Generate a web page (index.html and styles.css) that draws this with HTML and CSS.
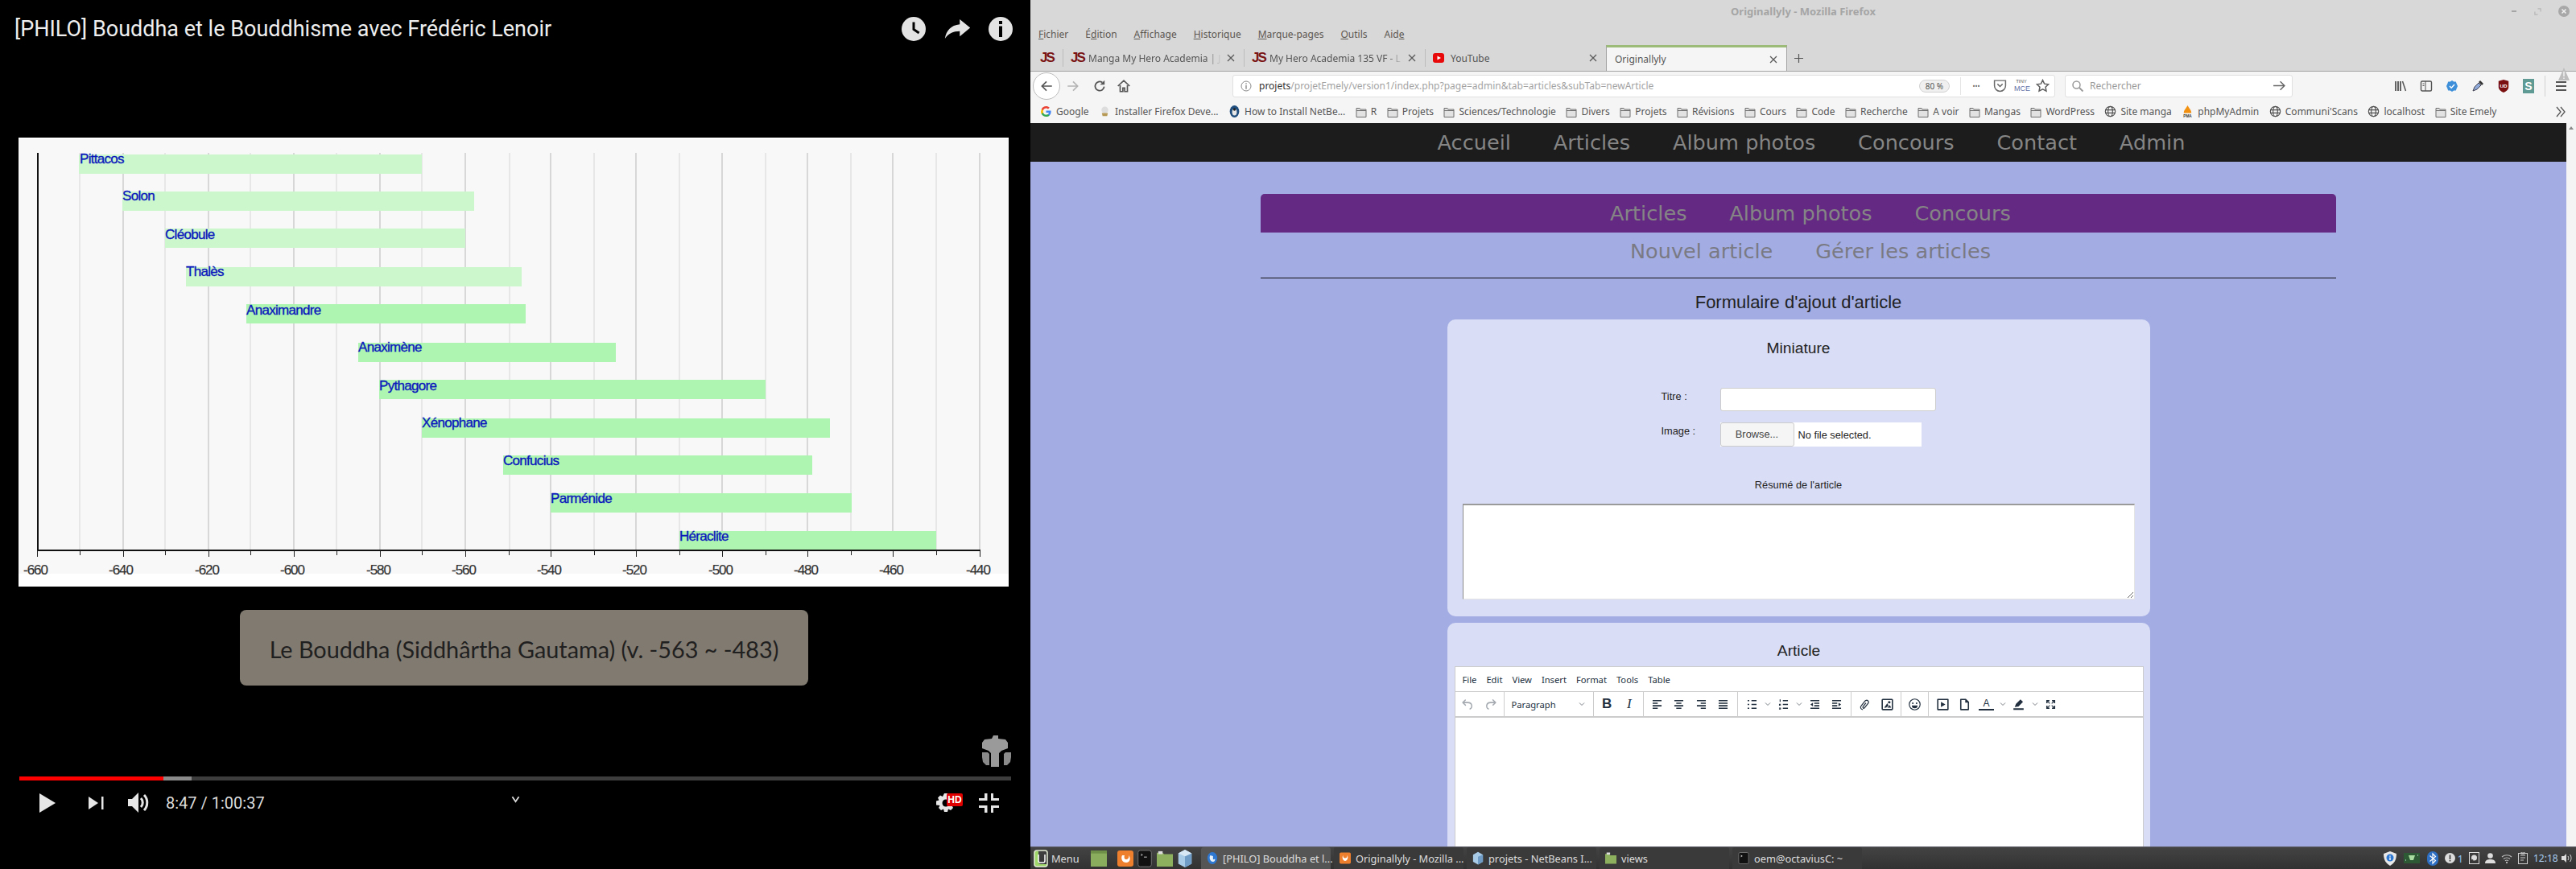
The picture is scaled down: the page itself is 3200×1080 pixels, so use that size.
FILE: index.html
```html
<!doctype html>
<html>
<head>
<meta charset="utf-8">
<title>Originallyly</title>
<link rel="stylesheet" href="styles.css">
</head>
<body>

<svg class="defs" width="0" height="0">
	<symbol id="folder" viewBox="0 0 14 16"><path d="M1 3.500h4l1 1.500h7v9.500H1z" fill="#e2e2e2" stroke="#6e6e6e"/><path d="M1 6.500h12" stroke="#6e6e6e"/></symbol>
	<symbol id="globe" viewBox="0 0 16 16"><g fill="none" stroke="#4f4f4f" stroke-width="1.2"><circle cx="8" cy="8" r="6.6"/><ellipse cx="8" cy="8" rx="3" ry="6.6"/><path d="M1.600 6h12.800M1.600 10h12.800"/></g></symbol>
	<symbol id="close" viewBox="0 0 10 10"><path d="M1 1l8 8M9 1l-8 8" stroke="#5a5a5a" stroke-width="1.3" fill="none"/></symbol>
	<symbol id="chev" viewBox="0 0 10 10"><path d="M2 3.500l3 3 3-3" stroke="#7b8086" stroke-width="1" fill="none"/></symbol>
</svg>

<div class="player">
	<div class="player-top">
		<div class="video-title">[PHILO] Bouddha et le Bouddhisme avec Frédéric Lenoir</div>
		<svg class="top-icon clock" viewBox="0 0 30 30"><circle cx="15" cy="15" r="15" fill="#e3e3e3"/><path d="M13.500 6.500h3v8.300l6 4-1.700 2.400-7.300-5z" fill="#000"/></svg>
		<svg class="top-icon share" viewBox="0 0 34 26"><path d="M20 0l14 11.500L20 23v-7C11 16 5 19 0 26 2 15 8 8 20 6.800z" fill="#e3e3e3"/></svg>
		<svg class="top-icon info" viewBox="0 0 30 30"><circle cx="15" cy="15" r="15" fill="#e3e3e3"/><path d="M13 5h4v4h-4zM13 11.500h4V25h-4z" fill="#000"/></svg>
	</div>

	<svg class="chart" viewBox="23 171 1230 558">
		<rect x="23" y="171" width="1230" height="558" fill="#fff"/>
		<rect x="23" y="173" width="1230" height="540" fill="#f8f8f8"/>
		<path class="grid-minor" d="M99 190V683M205 190V683M311 190V683M418 190V683M524 190V683M633 190V683M738 190V683M844 190V683M951 190V683M1057 190V683M1163 190V683"/>
		<path class="grid-major" d="M153 190V683M259 190V683M365 190V683M472 190V683M578 190V683M684 190V683M790 190V683M897 190V683M1003 190V683M1109 190V683M1217 190V683"/>
		<g class="bars-old">
			<rect x="98" y="192" width="426" height="24"/>
			<rect x="152" y="238" width="437" height="24"/>
			<rect x="205" y="284" width="373" height="24"/>
			<rect x="231" y="332" width="417" height="24"/>
		</g>
		<g class="bars">
			<rect x="306" y="378" width="347" height="24"/>
			<rect x="445" y="426" width="320" height="24"/>
			<rect x="471" y="472" width="480" height="24"/>
			<rect x="524" y="520" width="507" height="24"/>
			<rect x="625" y="566" width="384" height="24"/>
			<rect x="684" y="613" width="374" height="24"/>
			<rect x="844" y="660" width="319" height="23"/>
		</g>
		<g class="names">
			<text x="99" y="203">Pittacos</text>
			<text x="152" y="249">Solon</text>
			<text x="205" y="297">Cléobule</text>
			<text x="231" y="343">Thalès</text>
			<text x="306" y="391">Anaximandre</text>
			<text x="445" y="437">Anaximène</text>
			<text x="471" y="485">Pythagore</text>
			<text x="524" y="531">Xénophane</text>
			<text x="625" y="578">Confucius</text>
			<text x="684" y="625">Parménide</text>
			<text x="844" y="672">Héraclite</text>
		</g>
		<path class="axis" d="M47 190V684H1218"/>
		<path class="ticks" d="M46.500 684V692M99.500 684V690M153.500 684V692M205.500 684V690M259.500 684V692M311.500 684V690M365.500 684V692M418.500 684V690M472.500 684V692M524.500 684V690M578.500 684V692M632.500 684V690M684.500 684V692M738.500 684V690M790.500 684V692M844.500 684V690M897.500 684V692M951.500 684V690M1003.500 684V692M1057.500 684V690M1109.500 684V692M1163.500 684V690M1217.500 684V692"/>
		<g class="years">
			<text x="44" y="714">-660</text>
			<text x="150" y="714">-640</text>
			<text x="257" y="714">-620</text>
			<text x="363" y="714">-600</text>
			<text x="470" y="714">-580</text>
			<text x="576" y="714">-560</text>
			<text x="682" y="714">-540</text>
			<text x="788" y="714">-520</text>
			<text x="895" y="714">-500</text>
			<text x="1001" y="714">-480</text>
			<text x="1107" y="714">-460</text>
			<text x="1215" y="714">-440</text>
		</g>
	</svg>

	<div class="caption">Le Bouddha (Siddhârtha Gautama) (v. -563 ~ -483)</div>

	<svg class="watermark" viewBox="0 0 38 39">
		<path d="M15 0h6v4l9 1 3 4v7l-8 3-3 3v17h-10V22l-3-3-8-3V9l3-4 9-1z" fill="#9a9a9a"/>
		<path d="M1 21h7l2 2v14H6l-4-4-1-6zM37 21h-7l-2 2v14h4l4-4 1-6z" fill="#8a8a8a"/>
	</svg>

	<div class="progress"><div class="played"></div><div class="loaded"></div></div>

	<div class="controls">
		<svg class="ctl-play" viewBox="0 0 20 24"><path d="M0 0l20 12L0 24z" fill="#e6e6e6"/></svg>
		<svg class="ctl-next" viewBox="0 0 19 16"><path d="M0 0l12 8-12 8z" fill="#e6e6e6"/><path d="M16 0h2.500v16H16z" fill="#e6e6e6"/></svg>
		<svg class="ctl-vol" viewBox="0 0 27 25"><path d="M0 8h5l8-8v25l-8-8H0z" fill="#e6e6e6"/><path d="M16 7c3 3 3 8 0 11M20 3c5 5 5 14 0 19" fill="none" stroke="#e6e6e6" stroke-width="3"/></svg>
		<div class="time">8:47 / 1:00:37</div>
		<svg class="ctl-chev" viewBox="0 0 12 10"><path d="M1.500 1.500L6 8l4.500-6.500" fill="none" stroke="#ddd" stroke-width="2"/></svg>
		<div class="settings">
			<svg viewBox="0 0 24 24"><path d="M10 0h4l1 3.500 3-1.500 3 3-1.500 3 3.500 1v5l-3.500 1 1.500 3-3 3-3-1.500-1 3.500h-4l-1-3.500-3 1.500-3-3 1.500-3L0 14.500v-5l3.500-1L2 5.500l3-3 3 1.500z" fill="#e6e6e6"/><circle cx="12" cy="12" r="4.500" fill="#000"/></svg>
			<span class="hd">HD</span>
		</div>
		<svg class="ctl-exit" viewBox="0 0 25 24"><path d="M7 0h3.500v9H0V6h7zM15 0h3v6h7v3H15zM0 15h10.500v9H7v-6H0zM15 15h10v3h-7v6h-3z" fill="#e6e6e6"/></svg>
	</div>
</div>

<div class="firefox">
	<div class="titlebar">
		<div></div>
		<div class="win-title">Originallyly - Mozilla Firefox</div>
		<div class="win-btns">
			<span class="win-min"></span>
			<svg class="win-max" viewBox="0 0 10 10"><path d="M1 5v4h4M5 1h4v4" fill="none" stroke="#b5b5b5" stroke-width="1.300"/></svg>
			<svg class="win-close" viewBox="0 0 14 14"><circle cx="7" cy="7" r="7" fill="#a8a8a8"/><path d="M4.500 4.500l5 5M9.500 4.500l-5 5" stroke="#f2f2f2" stroke-width="1.500"/></svg>
		</div>
	</div>

	<div class="menubar">
		<span><u>F</u>ichier</span><span>É<u>d</u>ition</span><span><u>A</u>ffichage</span><span><u>H</u>istorique</span><span><u>M</u>arque-pages</span><span><u>O</u>utils</span><span>Aid<u>e</u></span>
	</div>

	<div class="tabs">
		<div class="tab pinned"><span class="fav-js">JS</span></div>
		<div class="tab"><span class="fav-js">JS</span><span class="tab-name fade">Manga My Hero Academia | J</span><svg class="tab-x"><use href="#close"/></svg></div>
		<div class="tab"><span class="fav-js">JS</span><span class="tab-name fade">My Hero Academia 135 VF - L</span><svg class="tab-x"><use href="#close"/></svg></div>
		<div class="tab"><svg class="fav-yt" viewBox="0 0 14 14"><rect x="0" y="1" width="14" height="12" rx="3" fill="#e8090b"/><path d="M5.500 4.500v5L10 7z" fill="#fff"/></svg><span class="tab-name">YouTube</span><svg class="tab-x"><use href="#close"/></svg></div>
		<div class="tab active"><span class="tab-name">Originallyly</span><svg class="tab-x"><use href="#close"/></svg></div>
		<svg class="tab-new" viewBox="0 0 12 12"><path d="M6 0v12M0 6h12" stroke="#555" stroke-width="1.300"/></svg>
	</div>

	<div class="navbar">
		<div class="back"><svg viewBox="0 0 16 16"><path d="M14 8H3M8 3L3 8l5 5" fill="none" stroke="#555" stroke-width="1.500"/></svg></div>
		<svg class="nav-ico forward" viewBox="0 0 16 16"><path d="M2 8h11M8 3l5 5-5 5" fill="none" stroke="#b4b4b4" stroke-width="1.500"/></svg>
		<svg class="nav-ico reload" viewBox="0 0 16 16"><path d="M13 8.500A5 5 0 1 1 11 4" fill="none" stroke="#555" stroke-width="1.600"/><path d="M13.500 1.500v5h-5z" fill="#555"/></svg>
		<svg class="nav-ico home" viewBox="0 0 16 16"><path d="M1.500 8L8 2l6.500 6M4 7v7h3v-4h2v4h3V7" fill="none" stroke="#555" stroke-width="1.500"/></svg>
		<div class="urlbar">
			<svg class="url-info" viewBox="0 0 14 14"><circle cx="7" cy="7" r="6" fill="none" stroke="#8a8a8a"/><path d="M6.300 3.300h1.400v1.400H6.300zM6.300 6h1.400v4.700H6.300z" fill="#8a8a8a"/></svg>
			<div class="url-text"><span class="url-host">projets</span>/projetEmely/version1/index.php?page=admin&amp;tab=articles&amp;subTab=newArticle</div>
			<div class="url-zoom">80 %</div>
			<div class="url-sep"></div>
			<div class="url-more">•••</div>
			<svg class="url-pocket" viewBox="0 0 16 16"><path d="M1.500 2h13v6a6.500 6.500 0 0 1-13 0z" fill="none" stroke="#6a6a6a" stroke-width="1.400"/><path d="M5 6l3 3 3-3" fill="none" stroke="#6a6a6a" stroke-width="1.400"/></svg>
			<div class="url-tiny"><span>TINY</span><span class="mce">MCE</span></div>
			<svg class="url-star" viewBox="0 0 16 16"><path d="M8 1.500l2 4.300 4.700.6-3.400 3.200.9 4.700L8 12l-4.200 2.300.9-4.700L1.300 6.400 6 5.800z" fill="none" stroke="#5f5f5f" stroke-width="1.400"/></svg>
		</div>
		<div class="searchbar">
			<svg class="search-ico" viewBox="0 0 16 16"><circle cx="6.500" cy="6.500" r="4.500" fill="none" stroke="#999" stroke-width="1.500"/><path d="M10 10l4.500 4.500" stroke="#999" stroke-width="1.800"/></svg>
			<div class="search-text">Rechercher</div>
			<svg class="search-go" viewBox="0 0 16 16"><path d="M1 8h13M9 3l5 5-5 5" fill="none" stroke="#666" stroke-width="1.400"/></svg>
		</div>
		<div class="ext-icons">
			<svg viewBox="0 0 16 16"><path d="M2 2v12M5 2v12M8 2v12" stroke="#555" stroke-width="1.800"/><path d="M10.500 2l4 12" stroke="#555" stroke-width="1.500"/></svg>
			<svg viewBox="0 0 16 16"><rect x="1.500" y="2" width="13" height="12" rx="1.500" fill="none" stroke="#555" stroke-width="1.400"/><path d="M7 2v12" stroke="#555"/><path d="M3.500 5h2M3.500 7.500h2" stroke="#555"/></svg>
			<svg viewBox="0 0 16 16"><path d="M8 1l2.200 1.400 2.600.2.900 2.400L15 8l-1.300 3-.9 2.400-2.600.2L8 15l-2.200-1.400-2.600-.2-.9-2.400L1 8l1.300-3 .9-2.400 2.600-.2z" fill="#3d8fd9"/><path d="M5 8l2.200 2.200L11 6" fill="none" stroke="#fff" stroke-width="1.400"/></svg>
			<svg viewBox="0 0 16 16"><path d="M2 14l2-5 5-5 3 3-5 5z" fill="#8faad8" stroke="#445"/><path d="M9 3l2-2 4 4-2 2z" fill="#333"/></svg>
			<svg viewBox="0 0 16 18"><path d="M8 0l7 2v8c0 4-4 6.500-7 8-3-1.500-7-4-7-8V2z" fill="#7a1010"/><text x="8" y="11" class="ublock">UD</text></svg>
			<span class="ext-s">S</span>
			<div class="ext-sep"></div>
			<div class="hamburger"><span></span><span></span><span></span><svg class="warn" viewBox="0 0 14 16"><path d="M7 0l7 16H0z" fill="#bdbdbd"/><path d="M6.300 5h1.400v6H6.300zM6.300 12.500h1.400V14H6.300z" fill="#f5f5f5"/></svg></div>
		</div>
	</div>

	<div class="bookmarks">
		<div class="bm"><svg class="bm-ico" viewBox="0 0 16 16"><path d="M14.500 8.200c0-.5 0-1-.1-1.400H8v2.700h3.700c-.2.900-.7 1.600-1.400 2.100v1.700h2.200c1.300-1.200 2-3 2-5.100z" fill="#4285f4"/><path d="M8 15c1.900 0 3.400-.6 4.500-1.700l-2.200-1.700c-.6.400-1.400.7-2.300.7-1.800 0-3.300-1.200-3.800-2.800H1.900v1.800C3 13.500 5.300 15 8 15z" fill="#34a853"/><path d="M4.200 9.500c-.3-.9-.3-1.800 0-2.700V5H1.900a7 7 0 0 0 0 6.300z" fill="#fbbc05"/><path d="M8 3.800c1 0 1.900.4 2.600 1l2-2C11.400 1.700 9.800 1 8 1 5.300 1 3 2.500 1.900 4.800l2.300 1.800C4.700 5 6.200 3.800 8 3.800z" fill="#ea4335"/></svg><span>Google</span></div>
		<div class="bm"><svg class="bm-ico" viewBox="0 0 16 16"><circle cx="8" cy="6" r="4.500" fill="#ddd"/><path d="M4 10h8l-1 4H5z" fill="#b79a55"/></svg><span>Installer Firefox Deve...</span></div>
		<div class="bm"><svg class="bm-ico" viewBox="0 0 16 18"><ellipse cx="8" cy="9" rx="7" ry="9" fill="#1f4d7d"/><ellipse cx="8" cy="10" rx="3.500" ry="5" fill="#e8e8e8"/><circle cx="8" cy="6" r="2" fill="#222"/></svg><span>How to Install NetBe...</span></div>
		<div class="bm"><svg class="bm-fold"><use href="#folder"/></svg><span>R</span></div>
		<div class="bm"><svg class="bm-fold"><use href="#folder"/></svg><span>Projets</span></div>
		<div class="bm"><svg class="bm-fold"><use href="#folder"/></svg><span>Sciences/Technologie</span></div>
		<div class="bm"><svg class="bm-fold"><use href="#folder"/></svg><span>Divers</span></div>
		<div class="bm"><svg class="bm-fold"><use href="#folder"/></svg><span>Projets</span></div>
		<div class="bm"><svg class="bm-fold"><use href="#folder"/></svg><span>Révisions</span></div>
		<div class="bm"><svg class="bm-fold"><use href="#folder"/></svg><span>Cours</span></div>
		<div class="bm"><svg class="bm-fold"><use href="#folder"/></svg><span>Code</span></div>
		<div class="bm"><svg class="bm-fold"><use href="#folder"/></svg><span>Recherche</span></div>
		<div class="bm"><svg class="bm-fold"><use href="#folder"/></svg><span>A voir</span></div>
		<div class="bm"><svg class="bm-fold"><use href="#folder"/></svg><span>Mangas</span></div>
		<div class="bm"><svg class="bm-fold"><use href="#folder"/></svg><span>WordPress</span></div>
		<div class="bm"><svg class="bm-ico"><use href="#globe"/></svg><span>Site manga</span></div>
		<div class="bm"><svg class="bm-ico" viewBox="0 0 16 16"><path d="M3 10C3 6 6 4 8 0c2 4 5 6 5 10z" fill="#f29111"/><text x="8" y="15.500" class="pma">PMA</text></svg><span>phpMyAdmin</span></div>
		<div class="bm"><svg class="bm-ico"><use href="#globe"/></svg><span>Communi'Scans</span></div>
		<div class="bm"><svg class="bm-ico"><use href="#globe"/></svg><span>localhost</span></div>
		<div class="bm"><svg class="bm-fold"><use href="#folder"/></svg><span>Site Emely</span></div>
		<svg class="bm-more" viewBox="0 0 14 14"><path d="M2 1l5 6-5 6M7 1l5 6-5 6" fill="none" stroke="#555" stroke-width="1.300"/></svg>
	</div>

	<div class="viewport">
		<div class="page">
			<div class="site-nav">
				<a>Accueil</a><a>Articles</a><a>Album photos</a><a>Concours</a><a>Contact</a><a>Admin</a>
			</div>
			<div class="admin">
				<div class="admin-nav"><a>Articles</a><a>Album photos</a><a>Concours</a></div>
				<div class="sub-nav"><a>Nouvel article</a><a>Gérer les articles</a></div>
				<div class="rule"></div>
				<div class="form-title">Formulaire d'ajout d'article</div>

				<div class="card">
					<div class="card-title">Miniature</div>
					<div class="row first">
						<label>Titre :</label>
						<div class="text-input"></div>
					</div>
					<div class="row">
						<label>Image :</label>
						<div class="file-input"><span class="browse">Browse...</span><span class="nofile">No file selected.</span></div>
					</div>
					<div class="resume-label">Résumé de l'article</div>
					<textarea class="resume"></textarea>
				</div>

				<div class="card editor-card">
					<div class="card-title">Article</div>
					<div class="editor">
						<div class="ed-menu"><span>File</span><span>Edit</span><span>View</span><span>Insert</span><span>Format</span><span>Tools</span><span>Table</span></div>
						<div class="ed-tools">
							<div class="ed-group g-history">
								<svg class="ed-ico off" viewBox="0 0 24 24"><path d="M6.400 8H12c3.700 0 6.200 2 6.800 5.100.6 2.700-.4 5.600-2.900 6.700a1 1 0 1 1-.8-1.800c1.600-.7 2.300-2.700 1.900-4.500-.5-2.200-2.300-3.500-5-3.500H6.400l2.300 2.300a1 1 0 1 1-1.400 1.400l-4-4a1 1 0 0 1 0-1.400l4-4a1 1 0 0 1 1.400 1.400z"/></svg>
								<svg class="ed-ico off" viewBox="0 0 24 24"><path d="M17.600 10H12c-2.800 0-4.400 1.400-4.900 3.500-.4 2 .3 3.900 1.900 4.500a1 1 0 1 1-.8 1.800c-2.500-1-3.500-4-2.900-6.700C5.800 10 8.300 8 12 8h5.600l-2.300-2.300a1 1 0 1 1 1.400-1.400l4 4a1 1 0 0 1 0 1.400l-4 4a1 1 0 0 1-1.400-1.400z"/></svg>
							</div>
							<div class="ed-group para"><span>Paragraph</span><svg class="ed-chev"><use href="#chev"/></svg></div>
							<div class="ed-group g-style">
								<b class="ed-b">B</b><i class="ed-i">I</i>
							</div>
							<div class="ed-group g-align">
								<svg class="ed-ico" viewBox="0 0 24 24"><path d="M5 5h14v2H5zM5 9h8v2H5zM5 13h14v2H5zM5 17h8v2H5z"/></svg>
								<svg class="ed-ico" viewBox="0 0 24 24"><path d="M5 5h14v2H5zM8 9h8v2H8zM5 13h14v2H5zM8 17h8v2H8z"/></svg>
								<svg class="ed-ico" viewBox="0 0 24 24"><path d="M5 5h14v2H5zM11 9h8v2h-8zM5 13h14v2H5zM11 17h8v2h-8z"/></svg>
								<svg class="ed-ico" viewBox="0 0 24 24"><path d="M5 5h14v2H5zM5 9h14v2H5zM5 13h14v2H5zM5 17h14v2H5z"/></svg>
							</div>
							<div class="ed-group g-lists">
								<svg class="ed-ico" viewBox="0 0 24 24"><path d="M11 5h8v2h-8zM11 11h8v2h-8zM11 17h8v2h-8zM5 5h2.500v2H5zM5 11h2.500v2H5zM5 17h2.500v2H5z"/></svg>
								<svg class="ed-chev"><use href="#chev"/></svg>
								<svg class="ed-ico" viewBox="0 0 24 24"><path d="M11 5h8v2h-8zM11 11h8v2h-8zM11 17h8v2h-8zM6 4h1.500v4H6zM5 11h3v1l-2 1h2v1H5zM5 17h3v3H5v-1h2v-.500H5z"/></svg>
								<svg class="ed-chev"><use href="#chev"/></svg>
								<svg class="ed-ico" viewBox="0 0 24 24"><path d="M5 5h14v2H5zM11 9h8v2h-8zM11 13h8v2h-8zM5 17h14v2H5zM9 9v6l-4-3z"/></svg>
								<svg class="ed-ico spaced" viewBox="0 0 24 24"><path d="M5 5h14v2H5zM5 9h8v2H5zM5 13h8v2H5zM5 17h14v2H5zM15 9v6l4-3z"/></svg>
							</div>
							<div class="ed-group g-insert">
								<svg class="ed-ico" viewBox="0 0 24 24"><path d="M9 20a3.500 3.500 0 0 1-2.500-6l6-7.500a3 3 0 0 1 4.700 3.800l-5.500 7a1.500 1.500 0 0 1-2.400-1.900l4.500-5.700" fill="none" stroke="#222f3e" stroke-width="1.600"/></svg>
								<svg class="ed-ico" viewBox="0 0 24 24"><path d="M5 3h14a2 2 0 0 1 2 2v14a2 2 0 0 1-2 2H5a2 2 0 0 1-2-2V5a2 2 0 0 1 2-2zm0 2v14h14V5z"/><circle cx="15" cy="8.500" r="2"/><path d="M7 17l5-7 2 4-4 3z"/><path d="M12 17l4-4 2 4z"/></svg>
							</div>
							<div class="ed-group g-emoji">
								<svg class="ed-ico" viewBox="0 0 24 24"><circle cx="12" cy="12" r="8.500" fill="none" stroke="#222f3e" stroke-width="1.500"/><circle cx="9" cy="10" r="1.300"/><circle cx="15" cy="10" r="1.300"/><path d="M7.500 13.500h9a4.500 4.500 0 0 1-9 0z"/></svg>
							</div>
							<div class="ed-group g-last">
								<svg class="ed-ico" viewBox="0 0 24 24"><path d="M4 3h16a1 1 0 0 1 1 1v16a1 1 0 0 1-1 1H4a1 1 0 0 1-1-1V4a1 1 0 0 1 1-1zm1 2v14h14V5z"/><path d="M9 8l7 4-7 4z"/></svg>
								<svg class="ed-ico spaced" viewBox="0 0 24 24"><path d="M6 3h8l5 5v12a1 1 0 0 1-1 1H6a1 1 0 0 1-1-1V4a1 1 0 0 1 1-1zm1 2v14h10V9h-4V5z"/></svg>
								<span class="ed-a spaced">A</span>
								<svg class="ed-chev"><use href="#chev"/></svg>
								<svg class="ed-ico" viewBox="0 0 24 24"><path d="M4 18h16v2.500H4zM6 16l2-5 7-7 4 4-7 7z"/></svg>
								<svg class="ed-chev"><use href="#chev"/></svg>
								<svg class="ed-ico" viewBox="0 0 24 24"><path d="M5 5h5v2H8l3 3-1 1-3-3v2H5zM19 5v5h-2V8l-3 3-1-1 3-3h-2V5zM5 19v-5h2v2l3-3 1 1-3 3h2v2zM19 19h-5v-2h2l-3-3 1-1 3 3v-2h2z"/></svg>
							</div>
						</div>
						<div class="ed-body"></div>
					</div>
				</div>
			</div>
		</div>
		<div class="scrollbar"><svg viewBox="0 0 8 6"><path d="M4 1l3 4H1z" fill="#888"/></svg></div>
	</div>

	<div class="taskbar">
		<div class="start">
			<svg class="mint" viewBox="0 0 18 22"><path d="M1 2h5v13c0 2 1 3 3 3h7v-2 3a2 2 0 0 1-2 2H5c-3 0-4-2-4-4z" fill="#9fd66a"/><rect x="1" y="1" width="16" height="20" rx="3" fill="none" stroke="#e6f0d8" stroke-width="1.500"/><path d="M6 6v8c0 1 1 2 2 2h4c1 0 2-1 2-2V6" fill="none" stroke="#fff" stroke-width="1.500"/></svg>
			<span>Menu</span>
		</div>
		<svg class="launch desk" viewBox="0 0 22 22"><rect width="22" height="22" fill="#89ad5c"/><rect width="22" height="4" fill="#6d8f47"/></svg>
		<svg class="launch ffx" viewBox="0 0 20 22"><rect y="1" width="20" height="20" rx="3" fill="#ee7f2d"/><path d="M6 7c-2 4 0 9 5 9s6-6 3-9c1 3-1 5-3 5S8 10 9 7z" fill="#fff"/></svg>
		<svg class="launch term" viewBox="0 0 20 24"><rect x="1" y="1" width="18" height="22" rx="3" fill="#111" stroke="#777"/><path d="M5 6l2 1-2 1M9 10h4" stroke="#ddd" fill="none"/></svg>
		<svg class="launch fold" viewBox="0 0 22 22"><path d="M0 3h8l2 2h12v17H0z" fill="#8cb05e"/><path d="M2 1h6v4H2z" fill="#ddd"/></svg>
		<svg class="launch box" viewBox="0 0 20 24"><path d="M10 0l9 5v14l-9 5-9-5V5z" fill="#a8cbe8"/><path d="M10 9v15l9-5V5z" fill="#6e9cc6"/><path d="M1 5l9 4 9-4-9-5z" fill="#d8e8f5"/></svg>
		<div class="task current"><svg viewBox="0 0 16 18"><ellipse cx="8" cy="9" rx="7" ry="8.500" fill="#2e78d2"/><path d="M5 5c-2 4 0 9 4 9 2 0 3-2 3-4l-3 1 0-5z" fill="#e6f0fa"/></svg><span>[PHILO] Bouddha et l...</span></div>
		<div class="task"><svg viewBox="0 0 16 18"><rect y="1" width="16" height="16" rx="2" fill="#ee7f2d"/><path d="M5 5c-2 3 0 8 3 8s5-5 3-8c0 3-1 4-3 4S5 8 5 5z" fill="#fff"/></svg><span>Originallyly - Mozilla ...</span></div>
		<div class="task"><svg viewBox="0 0 16 18"><path d="M8 0l7 4v10l-7 4-7-4V4z" fill="#a8cbe8"/><path d="M8 7v11l7-4V4z" fill="#6e9cc6"/></svg><span>projets - NetBeans I...</span></div>
		<div class="task"><svg viewBox="0 0 16 18"><path d="M0 3h6l1 2h9v12H0z" fill="#8cb05e"/><path d="M2 1h5v3H2z" fill="#ddd"/></svg><span>views</span></div>
		<div class="task"><svg viewBox="0 0 16 18"><rect x="1" y="1" width="14" height="16" rx="2" fill="#111" stroke="#777"/><path d="M4 5l2 1-2 1" stroke="#ddd" fill="none"/></svg><span>oem@octaviusC: ~</span></div>
		<div class="tray">
			<svg class="shield" viewBox="0 0 16 18"><path d="M8 0l8 3c0 8-3 12-8 15C3 15 0 11 0 3z" fill="#e8e8e8"/><circle cx="8" cy="8" r="4.500" fill="#2e78d2"/><path d="M7.300 5.500h1.400v1.300H7.300zM7.300 7.500h1.400v3.500H7.300z" fill="#fff"/></svg>
			<svg class="chip" viewBox="0 0 20 13"><rect width="20" height="13" fill="#2d5a35"/><path d="M6 3h8l-2 6H8z" fill="#a8dca0"/><path d="M2 9h1M17 3h1" stroke="#dfe"/></svg>
			<svg class="blue" viewBox="0 0 14 18"><rect width="14" height="18" rx="7" fill="#2e6fc4"/><path d="M3.500 5.500l7 6L7 15V3l3.500 3.500-7 6" fill="none" stroke="#fff" stroke-width="1.200"/></svg>
			<svg class="warn-c" viewBox="0 0 13 13"><circle cx="6.500" cy="6.500" r="6.500" fill="#ddd"/><path d="M5.700 2.500h1.600v5.500H5.700zM5.700 9h1.600v1.600H5.700z" fill="#333"/></svg>
			<span class="tray-num">1</span>
			<svg class="disk" viewBox="0 0 13 15"><rect x=".5" y=".5" width="12" height="14" fill="none" stroke="#ddd"/><circle cx="6.500" cy="7" r="3.500" fill="#ddd"/><path d="M3 12l2-3" stroke="#333"/></svg>
			<svg class="user" viewBox="0 0 13 13"><circle cx="6.500" cy="3.500" r="3.300" fill="#ddd"/><path d="M0 13c0-4 3-5 6.500-5S13 9 13 13z" fill="#ddd"/></svg>
			<svg class="wifi" viewBox="0 0 14 12"><path d="M1 4c3-3 9-3 12 0M3 6.500c2-2 6-2 8 0M5 8.800c1-1 3-1 4 0" fill="none" stroke="#bbb" stroke-width="1.200"/><circle cx="7" cy="11" r="1" fill="#ddd"/></svg>
			<svg class="clip" viewBox="0 0 12 15"><rect x=".5" y="1.500" width="11" height="13" fill="none" stroke="#ccc"/><path d="M3 4h6M3 7h6M3 10h4M4 0h4v2H4z" stroke="#ccc" fill="none"/></svg>
			<span class="clock-txt">12:18</span>
			<svg class="spk" viewBox="0 0 14 13"><path d="M0 4h3l3-3v11L3 9H0z" fill="#ddd"/><path d="M8 4c1 1.500 1 3.500 0 5M10.500 2c2 2.500 2 6.500 0 9" stroke="#ddd" fill="none"/></svg>
		</div>
	</div>
</div>

</body>
</html>
```

FILE: styles.css
```css
html,body{
	margin:0;
	padding:0;
}
body{
	width:3200px;
	height:1080px;
	overflow:hidden;
	display:flex;
	background:#000;
	font-family:"Noto Sans",sans-serif;
}
.defs{
	position:absolute;
}
svg{
	display:block;
	flex:none;
}

/* video player */
.player{
	width:1280px;
	height:1080px;
	background:#000;
	flex:none;
}
.player-top{
	display:flex;
	align-items:center;
	height:30px;
	padding:21px 0 0 18px;
}
.video-title{
	width:1102px;
	font:27px/30px Roboto,sans-serif;
	color:#eee;
	white-space:nowrap;
}
.top-icon{
	width:30px;
	height:30px;
}
.share{
	width:33px;
	height:24px;
	margin-left:23px;
}
.info{
	margin-left:22px;
}
.chart{
	width:1230px;
	height:558px;
	margin:120px 0 0 23px;
}
.grid-minor{
	stroke:#dcdcdc;
	stroke-width:1.2;
	fill:none;
}
.grid-major{
	stroke:#cacaca;
	stroke-width:1.4;
	fill:none;
}
.bars-old rect{
	fill:#ccf7cc;
}
.bars rect{
	fill:#aef5b2;
}
.names text{
	font:17px "Liberation Sans",sans-serif;
	letter-spacing:-.7px;
	fill:#0a18bc;
	stroke:#0a18bc;
	stroke-width:.35;
}
.axis{
	stroke:#111;
	stroke-width:2;
	fill:none;
}
.ticks{
	stroke:#222;
	stroke-width:1;
	fill:none;
}
.years text{
	font:17px "Liberation Sans",sans-serif;
	letter-spacing:-1px;
	fill:#333;
	stroke:#333;
	stroke-width:.2;
	text-anchor:middle;
}
.caption{
	width:706px;
	height:94px;
	margin:29px 0 0 298px;
	background:#807a70;
	border-radius:8px;
	font:28.8px/98px Lato,sans-serif;
	color:#202020;
	text-align:center;
	white-space:nowrap;
}
.watermark{
	width:38px;
	height:39px;
	margin:62px 0 0 1219px;
}
.progress{
	display:flex;
	width:1232px;
	height:5px;
	margin:12px 0 0 24px;
	background:#3d3d3d;
}
.played{
	width:179px;
	background:#f00;
}
.loaded{
	width:35px;
	background:#8a8a8a;
}
.controls{
	display:flex;
	align-items:center;
	height:25px;
	margin-top:15px;
	padding-left:49px;
}
.ctl-play{
	width:20px;
	height:24px;
}
.ctl-next{
	width:19px;
	height:16px;
	margin-left:41px;
}
.ctl-vol{
	width:27px;
	height:25px;
	margin-left:30px;
}
.time{
	width:125px;
	margin-left:20px;
	font:20px Roboto,sans-serif;
	color:#ddd;
	white-space:nowrap;
}
.ctl-chev{
	width:11px;
	height:9px;
	margin:-8px 0 0 303.500px;
}
.settings{
	position:relative;
	width:24px;
	height:24px;
	margin-left:517.500px;
}
.hd{
	position:absolute;
	left:13px;
	top:0;
	width:20px;
	height:16px;
	border-radius:2px;
	background:#e10000;
	color:#fff;
	font:bold 12px/16px "Liberation Sans",sans-serif;
	text-align:center;
}
.ctl-exit{
	width:25px;
	height:24px;
	margin-left:29px;
}

/* firefox window */
.firefox{
	width:1920px;
	height:1080px;
	display:flex;
	flex-direction:column;
	background:#d8d8d8;
	color:#555;
	font-size:12px;
	overflow:hidden;
}
.titlebar{
	display:grid;
	grid-template-columns:1fr auto 1fr;
	align-items:center;
	height:28px;
	flex:none;
}
.win-title{
	font-weight:bold;
	font-size:13px;
	color:#a5a5a5;
}
.win-btns{
	display:flex;
	align-items:center;
	justify-content:flex-end;
	padding-right:8px;
}
.win-min{
	width:6px;
	height:2px;
	background:#a5a5a5;
}
.win-max{
	width:9px;
	height:9px;
	margin-left:22px;
}
.win-close{
	width:14px;
	height:14px;
	margin-left:21px;
}
.menubar{
	display:flex;
	gap:21px;
	align-items:center;
	height:28px;
	padding-left:10px;
	flex:none;
	color:#5c5650;
}
.tabs{
	display:flex;
	height:32px;
	flex:none;
	border-bottom:1px solid #a3a3a3;
}
.tab{
	display:flex;
	align-items:center;
	width:225px;
	padding:0 11px 0 10px;
	box-sizing:border-box;
	position:relative;
}
.tab::before{
	content:"";
	position:absolute;
	left:0;
	top:5px;
	bottom:5px;
	width:1px;
	background:#bcbcbc;
}
.pinned{
	width:40px;
	padding-left:12px;
}
.pinned::before,.active::before{
	display:none;
}
.fav-js{
	width:18px;
	font:bold 17px/20px "Liberation Sans",sans-serif;
	letter-spacing:-2px;
	color:#7a1414;
	flex:none;
}
.fav-yt{
	width:14px;
	height:14px;
	margin:0 8px 0 0;
}
.tab-name{
	flex:1;
	margin-left:4px;
	white-space:nowrap;
}
.fade{
	-webkit-mask-image:linear-gradient(to right,#000 88%,transparent);
}
.tab .fav-yt + .tab-name,.active .tab-name{
	margin-left:0;
}
.tab-x{
	width:10px;
	height:10px;
	margin-left:6px;
}
.active{
	height:32px;
	margin-bottom:-1px;
	background:#f5f5f5;
	border-top:3px solid #9cbb78;
	border-left:1px solid #a3a3a3;
	border-right:1px solid #a3a3a3;
}
.tab-new{
	width:11px;
	height:11px;
	margin:11px 0 0 9px;
}
.navbar{
	display:flex;
	align-items:center;
	height:35px;
	background:#f5f5f5;
	flex:none;
}
.back{
	display:flex;
	align-items:center;
	justify-content:center;
	width:32px;
	height:32px;
	margin-left:3px;
	border:1px solid #bdbdbd;
	border-radius:50%;
	background:#fff;
}
.back svg{
	width:18px;
	height:18px;
}
.nav-ico{
	width:18px;
	height:18px;
}
.forward{
	margin-left:7px;
}
.reload{
	margin-left:15px;
}
.home{
	margin-left:12px;
}
.urlbar{
	display:flex;
	align-items:center;
	width:1022px;
	height:28px;
	margin-left:126px;
	box-sizing:border-box;
	background:#fff;
	border:1px solid #e0e0e0;
	border-radius:3px;
}
.url-info{
	width:14px;
	height:14px;
	margin-left:9px;
}
.url-text{
	width:820px;
	margin-left:9px;
	color:#a3a3a3;
	white-space:nowrap;
}
.url-host{
	color:#333;
}
.url-zoom{
	width:38px;
	height:16px;
	box-sizing:border-box;
	border:1px solid #d2d2d2;
	border-radius:8px;
	background:#f0f0f0;
	font-size:10px;
	line-height:14px;
	text-align:center;
}
.url-sep{
	width:1px;
	height:22px;
	margin-left:13px;
	background:#e4e4e4;
}
.url-more{
	width:20px;
	margin-left:9px;
	font-size:8px;
	color:#666;
	text-align:center;
}
.url-pocket{
	width:17px;
	height:17px;
	margin-left:11px;
}
.url-tiny{
	display:flex;
	flex-direction:column;
	width:18px;
	margin-left:9px;
	font:6px/7px "Liberation Sans",sans-serif;
	color:#555;
	text-align:center;
}
.mce{
	font-size:9px;
	line-height:10px;
	color:#6473a8;
}
.url-star{
	width:17px;
	height:17px;
	margin-left:9px;
}
.searchbar{
	display:flex;
	align-items:center;
	width:283px;
	height:28px;
	margin-left:12px;
	padding:0 7px;
	box-sizing:border-box;
	background:#fff;
	border:1px solid #e0e0e0;
	border-radius:3px;
}
.search-ico{
	width:16px;
	height:16px;
}
.search-text{
	flex:1;
	margin-left:7px;
	color:#9a9a9a;
}
.search-go{
	width:17px;
	height:17px;
}
.ext-icons{
	display:flex;
	align-items:center;
	gap:16px;
	margin-left:126px;
}
.ext-icons > svg{
	width:16px;
	height:16px;
}
.ublock{
	font:bold 7px "Liberation Sans",sans-serif;
	fill:#fff;
	text-anchor:middle;
}
.ext-s{
	width:14px;
	height:18px;
	background:#5f9a94;
	color:#fff;
	font:bold 14px/18px "Liberation Sans",sans-serif;
	text-align:center;
}
.ext-sep{
	width:1px;
	height:26px;
	background:#d2d2d2;
	margin-left:-3px;
}
.hamburger{
	position:relative;
	width:13px;
	margin-left:-3px;
}
.hamburger span{
	display:block;
	height:2px;
	margin:3px 0;
	background:#555;
}
.warn{
	position:absolute;
	left:3px;
	top:-14px;
	width:14px;
	height:16px;
}
.bookmarks{
	display:flex;
	align-items:center;
	gap:12.500px;
	height:29px;
	padding-left:12px;
	background:#f5f5f5;
	flex:none;
}
.bm{
	display:flex;
	align-items:center;
	gap:5px;
	white-space:nowrap;
}
.bm-ico{
	width:15px;
	height:15px;
}
.bm-fold{
	width:14px;
	height:16px;
}
.pma{
	font:bold 5px "Liberation Sans",sans-serif;
	fill:#333;
	text-anchor:middle;
}
.bm-more{
	width:14px;
	height:14px;
	margin-left:auto;
	margin-right:12px;
}

/* page in the browser */
.viewport{
	display:flex;
	flex:1;
	min-height:0;
}
.page{
	flex:1;
	background:#a3ade3;
	overflow:hidden;
}
.scrollbar{
	width:12px;
	background:#f4f4f4;
}
.scrollbar svg{
	width:8px;
	margin:3px auto 0;
}
.site-nav{
	display:flex;
	justify-content:center;
	gap:52.800px;
	height:48px;
	padding-left:32px;
	background:#1c1c1c;
}
.site-nav a,.admin-nav a,.sub-nav a{
	font:25.6px/48px "DejaVu Sans",sans-serif;
	color:#858585;
}
.admin{
	width:1336px;
	margin:40px auto 0;
}
.admin-nav{
	display:flex;
	justify-content:center;
	gap:52.800px;
	height:48px;
	padding-left:30px;
	background:#642a83;
	border-radius:5px 5px 0 0;
}
.sub-nav{
	display:flex;
	justify-content:center;
	gap:52.800px;
	height:46px;
	padding-left:30px;
}
.sub-nav a{
	color:#7a7a84;
	line-height:46px;
}
.rule{
	height:1px;
	margin-top:10px;
	background:#111;
}
.form-title{
	height:30px;
	margin-top:15px;
	font:22px/30px "Liberation Sans",sans-serif;
	color:#222;
	text-align:center;
}
.card{
	width:835px;
	margin:6px auto 0;
	padding:0 19px 21px;
	background:#d9ddf5;
	border-radius:10px;
	color:#222;
	font-family:"Liberation Sans",sans-serif;
}
.card-title{
	height:26px;
	padding-top:23px;
	font-size:19.2px;
	line-height:26px;
	text-align:center;
}
.row{
	display:flex;
	margin:14px 0 0 247px;
	font-size:12.8px;
}
.row.first{
	margin-top:36px;
}
.row label{
	width:73px;
	line-height:19px;
	padding-top:1px;
}
.text-input{
	width:268px;
	height:29px;
	box-sizing:border-box;
	background:#fff;
	border:1px solid #ccc;
	border-radius:3px;
}
.file-input{
	display:flex;
	align-items:center;
	width:250px;
	height:30px;
	background:#fff;
}
.browse{
	width:92px;
	height:30px;
	box-sizing:border-box;
	border:1px solid #ccc;
	border-radius:3px;
	background:#f5f5f5;
	color:#444;
	line-height:28px;
	text-align:center;
}
.nofile{
	margin-left:5px;
}
.resume-label{
	height:20px;
	margin:38px 0 13px;
	font-size:12.8px;
	line-height:20px;
	text-align:center;
}
.resume{
	display:block;
	width:835px;
	height:119px;
	padding:0;
	box-sizing:border-box;
	background:#fff;
	border:1px solid #e4e4e4;
	border-top:2px solid #9a9a9a;
	border-left:1px solid #8a8a8a;
}
.editor-card{
	width:856px;
	height:600px;
	margin-top:8px;
	padding:0 8px 0 9px;
}
.editor-card .card-title{
	padding-top:22px;
}
.editor{
	margin-top:6px;
	background:#fff;
	border:1px solid #ccc;
	font-family:"Noto Sans",sans-serif;
	color:#222f3e;
}
.ed-menu{
	display:flex;
	gap:12px;
	align-items:center;
	height:30px;
	padding-left:9px;
	border-bottom:1px solid #ccc;
	font-size:11.2px;
}
.ed-tools{
	display:flex;
	height:30px;
	border-bottom:2px solid #ccc;
}
.ed-group{
	display:flex;
	align-items:center;
	justify-content:center;
	box-sizing:border-box;
	gap:8.500px;
	border-right:1px solid #ccc;
}
.g-history{
	width:61px;
}
.para{
	width:111px;
	padding:0 9px;
	justify-content:space-between;
	font-size:11.2px;
}
.g-style{
	width:62px;
}
.g-align{
	width:117px;
}
.g-lists{
	width:141.500px;
	gap:5px;
}
.g-insert{
	width:62px;
}
.g-emoji{
	width:33.500px;
}
.g-last{
	gap:5.500px;
	padding-left:8.500px;
	border-right:none;
}
.spaced{
	margin-left:2.500px;
}
.ed-ico{
	width:19px;
	height:19px;
	fill:#222f3e;
}
.off{
	fill:#a5aab1;
}
.ed-chev{
	width:10px;
	height:10px;
}
.ed-b{
	width:19px;
	font:bold 17px "Liberation Sans",sans-serif;
	text-align:center;
}
.ed-i{
	width:19px;
	font:italic 17px "Liberation Serif",serif;
	text-align:center;
}
.ed-a{
	width:19px;
	font:12px/14px "Liberation Sans",sans-serif;
	border-bottom:2px solid #222f3e;
	text-align:center;
}
.ed-body{
	height:500px;
}

/* panel of the desktop */
.taskbar{
	display:flex;
	align-items:center;
	height:28px;
	flex:none;
	box-sizing:border-box;
	border-top:1px solid #5c5c66;
	background:linear-gradient(#434343,#323232);
	color:#dedede;
	font-size:12.8px;
	position:relative;
}
.start{
	display:flex;
	align-items:center;
	gap:4px;
	width:75px;
	padding-left:4px;
	box-sizing:border-box;
}
.mint{
	width:18px;
	height:22px;
}
.launch{
	height:22px;
	width:20px;
}
.ffx{
	margin-left:13px;
}
.term{
	margin-left:4px;
}
.fold{
	margin-left:5px;
}
.box{
	margin-left:5px;
	margin-right:10px;
}
.task{
	display:flex;
	align-items:center;
	gap:6px;
	width:161px;
	height:27px;
	margin-right:4px;
	padding-left:7px;
	box-sizing:border-box;
	background:#3a3a3a;
	border-radius:3px 3px 0 0;
	white-space:nowrap;
}
.task svg{
	width:14px;
	height:17px;
}
.current{
	background:#555;
}
.tray{
	display:flex;
	align-items:center;
	margin-left:auto;
	padding-right:4px;
}
.shield{
	width:16px;
	height:18px;
}
.chip{
	width:20px;
	height:13px;
	margin-left:8.500px;
}
.blue{
	width:14px;
	height:18px;
	margin-left:9px;
}
.warn-c{
	width:13px;
	height:13px;
	margin-left:8px;
}
.tray-num{
	margin-left:3px;
	color:#8fbfe8;
}
.disk{
	width:13px;
	height:15px;
	margin-left:7px;
}
.user{
	width:13px;
	height:13px;
	margin-left:7px;
}
.wifi{
	width:14px;
	height:12px;
	margin-left:7px;
}
.clip{
	width:12px;
	height:15px;
	margin-left:7px;
}
.clock-txt{
	width:30px;
	margin-left:7px;
	color:#a8cdf0;
	font-size:12px;
	white-space:nowrap;
}
.spk{
	width:14px;
	height:13px;
	margin-left:5px;
}
```
